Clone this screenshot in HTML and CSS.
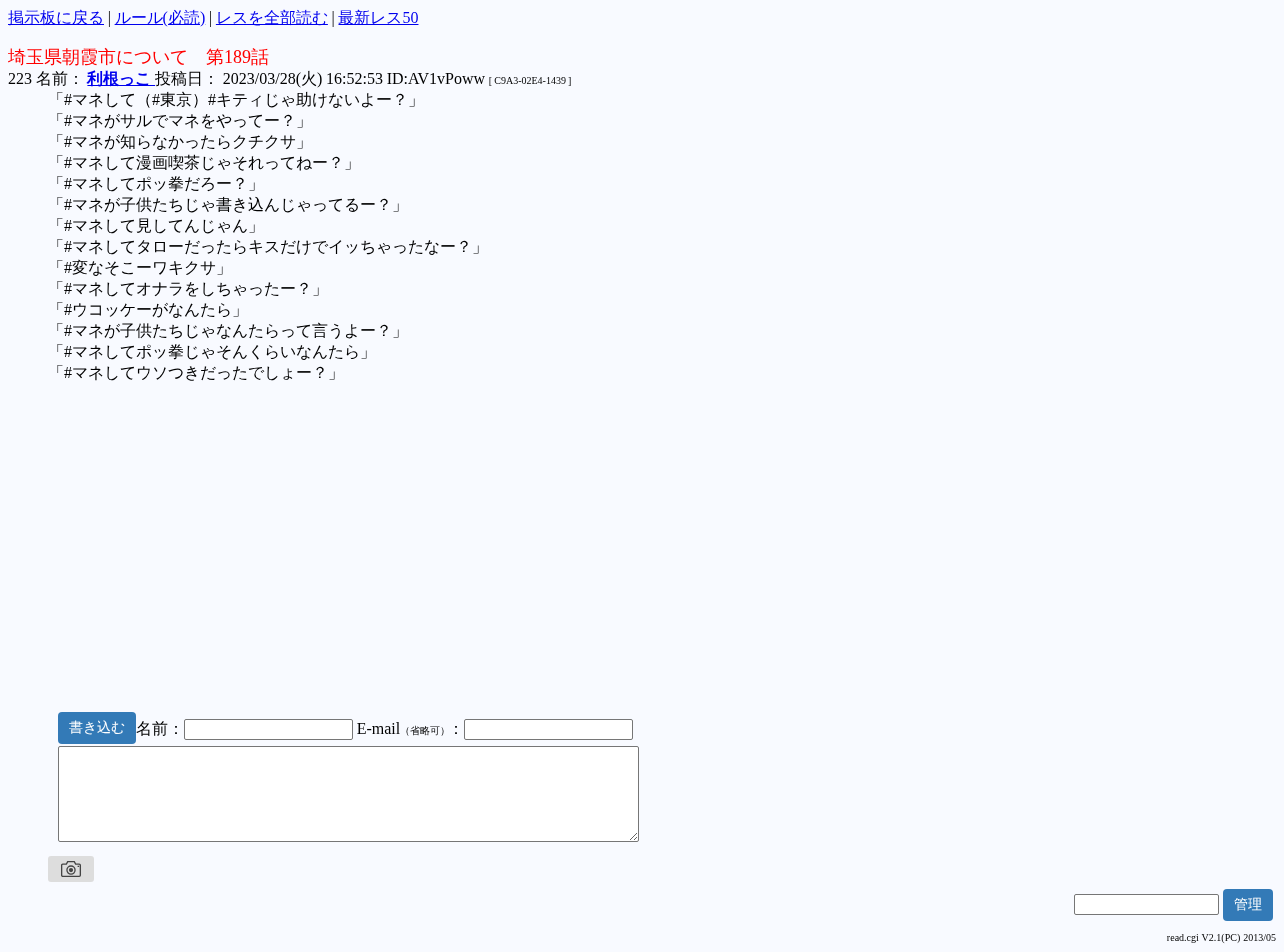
FILE: index.html
```html
<!DOCTYPE html>
<html>
<head>
<meta charset="utf-8">
<title>埼玉県朝霞市について　第189話</title>
<link rel="stylesheet" href="styles.css">
</head>
<body>
<div class="nav"><a href="#">掲示板に戻る</a> | <a href="#">ルール(必読)</a> | <a href="#">レスを全部読む</a> | <a href="#">最新レス50</a></div>
<div class="title">埼玉県朝霞市について　第189話</div>
<dl class="thread">
<dt>223 名前： <a href="#" class="name"><b> 利根っこ </b></a>投稿日： 2023/03/28(火) 16:52:53 ID:AV1vPoww <span class="tiny">[ C9A3-02E4-1439 ]</span></dt>
<dd>
「#マネして（#東京）#キティじゃ助けないよー？」<br>
「#マネがサルでマネをやってー？」<br>
「#マネが知らなかったらクチクサ」<br>
「#マネして漫画喫茶じゃそれってねー？」<br>
「#マネしてポッ拳だろー？」<br>
「#マネが子供たちじゃ書き込んじゃってるー？」<br>
「#マネして見してんじゃん」<br>
「#マネしてタローだったらキスだけでイッちゃったなー？」<br>
「#変なそこーワキクサ」<br>
「#マネしてオナラをしちゃったー？」<br>
「#ウコッケーがなんたら」<br>
「#マネが子供たちじゃなんたらって言うよー？」<br>
「#マネしてポッ拳じゃそんくらいなんたら」<br>
「#マネしてウソつきだったでしょー？」
</dd>
</dl>
<form class="post">
<div class="post-row"><button type="button" class="btn btn-write">書き込む</button>名前：<input type="text" class="field"> E-mail<span class="small">（省略可）</span>：<input type="text" class="field"></div>
<textarea class="message"></textarea>
</form>
<button type="button" class="camera" aria-label="画像">
<svg width="22" height="18" viewBox="0 0 20 16" fill="none" stroke="#444" stroke-width="1.2"><path d="M1.5 4.5a1 1 0 0 1 1-1h3.3l1.2-2.2h6l1.2 2.2h3.3a1 1 0 0 1 1 1v9.2a1 1 0 0 1-1 1h-15a1 1 0 0 1-1-1z"/><circle cx="10" cy="9" r="3.7"/><circle cx="10" cy="9" r="1.9" fill="#444" stroke="none"/><path d="M16 5.6h1.4"/></svg>
</button>
<div class="admin"><input type="text" class="field admin-field"><button type="button" class="btn btn-admin">管理</button></div>
<div class="version">read.cgi V2.1(PC) 2013/05</div>
</body>
</html>
```

FILE: styles.css
```css
html {
  background: #f8faff;
}
body {
  margin: 8px;
  color: #000;
  font-family: "Liberation Serif", serif;
  font-size: 16px;
  font-kerning: normal;
  word-spacing: -0.3px;
  will-change: opacity;
}
a { color: #0000ee; }
.title {
  margin-top: 16px;
  color: #ff0000;
  font-size: 18px;
}
.thread { margin: 0; }
.thread dd {
  margin: 0 0 0 40px;
  height: 609px;
}
.name { font-weight: bold; }
.tiny { font-size: 10px; }
.small { font-size: 9.6px; margin-right: -2px; }
.post {
  margin: 0 0 0 50px;
  padding-top: 13px;
  width: 582px;
}
.post-row { height: 32px; }
.field {
  width: 169px;
  height: 21px;
  box-sizing: border-box;
  padding: 1px 2px;
  border: 1px solid #767676;
  border-radius: 2px;
  background: #fff;
}
.btn {
  box-sizing: border-box;
  height: 32px;
  padding: 0 10px;
  border: 0;
  border-radius: 4px;
  background: #337ab7;
  color: #fff;
  font-family: "Liberation Sans", sans-serif;
  font-size: 14px;
}
.btn-write { width: 78px; vertical-align: 2px; }
.message {
  display: block;
  box-sizing: border-box;
  width: 581px;
  height: 96px;
  margin: 2px 0 0;
  border: 1px solid #767676;
  border-radius: 2px;
  background: #fff;
}
.camera {
  display: flex;
  align-items: center;
  justify-content: center;
  width: 46px;
  height: 26px;
  margin: 14px 0 0 40px;
  padding: 0;
  border: 0;
  border-radius: 3px;
  background: #dddddd;
}
.admin {
  display: flex;
  justify-content: flex-end;
  align-items: center;
  gap: 4px;
  margin: 7px 3px 0 0;
}
.admin-field { width: 145px; margin-top: -2px; }
.btn-admin { width: 50px; }
.version {
  margin-top: 11px;
  text-align: right;
  font-size: 10px;
  line-height: 12px;
  word-spacing: 0.5px;
}
```
